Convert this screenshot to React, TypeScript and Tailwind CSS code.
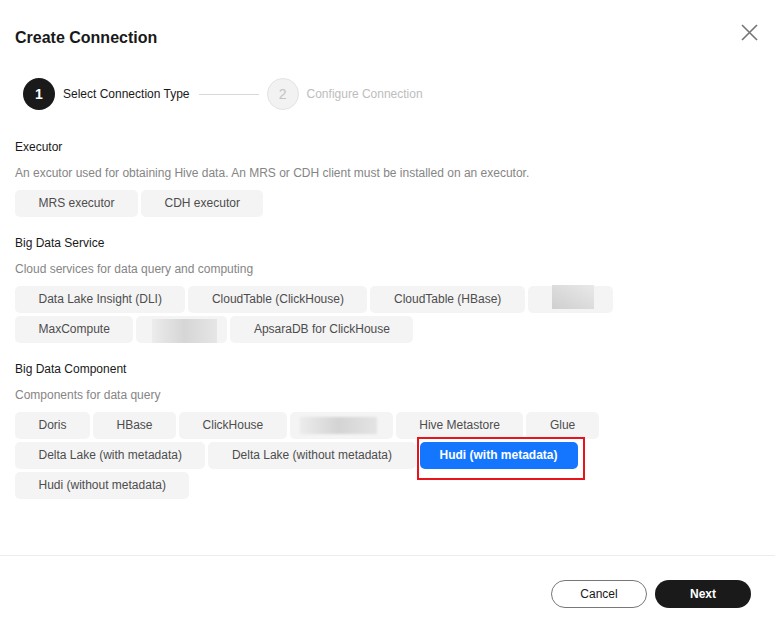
import React from 'react';

type Chip = { label: string; blur?: 'sm' | 'md' | 'lg'; selected?: boolean };

const sections: { title: string; desc: string; chips: Chip[] }[] = [
    {
        title: 'Executor',
        desc: 'An excutor used for obtaining Hive data. An MRS or CDH client must be installed on an executor.',
        chips: [{ label: 'MRS executor' }, { label: 'CDH executor' }],
    },
    {
        title: 'Big Data Service',
        desc: 'Cloud services for data query and computing',
        chips: [
            { label: 'Data Lake Insight (DLI)' },
            { label: 'CloudTable (ClickHouse)' },
            { label: 'CloudTable (HBase)' },
            { label: '', blur: 'sm' },
            { label: 'MaxCompute' },
            { label: '', blur: 'md' },
            { label: 'ApsaraDB for ClickHouse' },
        ],
    },
    {
        title: 'Big Data Component',
        desc: 'Components for data query',
        chips: [
            { label: 'Doris' },
            { label: 'HBase' },
            { label: 'ClickHouse' },
            { label: '', blur: 'lg' },
            { label: 'Hive Metastore' },
            { label: 'Glue' },
            { label: 'Delta Lake (with metadata)' },
            { label: 'Delta Lake (without metadata)' },
            { label: 'Hudi (with metadata)', selected: true },
            { label: 'Hudi (without metadata)' },
        ],
    },
];

function BlurChip({ size }: { size: 'sm' | 'md' | 'lg' }) {
    if (size === 'sm') {
        return (
            <div className="flex h-[27px] w-[85px] items-start justify-center rounded-[5px] bg-[#f4f4f4]">
                <div className="ml-[5px] mt-[-1px] h-[24px] w-[42px] bg-gradient-to-tr from-[#cfcfcf] to-[#e9e9e9] blur-[0.5px]" />
            </div>
        );
    }
    if (size === 'md') {
        return (
            <div className="flex h-[27px] w-[91px] items-end justify-center rounded-[5px] bg-[#f4f4f4]">
                <div className="ml-[6px] h-[24px] w-[65px] bg-gradient-to-r from-[#ececec] via-[#d6d6d6] to-[#e6e6e6] blur-[0.5px]" />
            </div>
        );
    }
    return (
        <div className="flex h-[27px] w-[103px] items-center justify-center rounded-[5px] bg-[#f4f4f4]">
            <div className="mr-[6px] h-[17px] w-[77px] bg-gradient-to-r from-[#ececec] via-[#d4d4d4] to-[#e4e4e4] blur-[1px]" />
        </div>
    );
}

function ChipItem({ chip }: { chip: Chip }) {
    if (chip.blur) return <BlurChip size={chip.blur} />;
    if (chip.selected) {
        return (
            <div className="relative ml-[1px]">
                <div className="h-[27px] w-[158px] rounded-[5px] bg-[#1476ff] text-center text-[12px] font-bold leading-[27px] text-white">
                    {chip.label}
                </div>
                <div className="pointer-events-none absolute -bottom-[11px] -left-[3px] -right-[7px] -top-[5px] border-2 border-[#e8141c]" />
            </div>
        );
    }
    return (
        <div className="h-[27px] rounded-[5px] bg-[#f4f4f4] px-[23.5px] text-[12px] leading-[27px] text-[#4d4d4d]">
            {chip.label}
        </div>
    );
}

export default function App() {
    return (
        <div
            className="flex h-[626px] w-[775px] flex-col bg-white text-[#191919]"
            style={{ fontFamily: '"Liberation Sans", Arial, sans-serif' }}
        >
            <div className="flex-1 px-[15px]">
                <div className="flex items-start justify-between pt-[26px]">
                    <h1 className="text-[16px] font-bold leading-[24px]">Create Connection</h1>
                    <button className="mr-[2px] mt-[-2px] text-[#757575]" aria-label="Close">
                        <svg width="17" height="17" viewBox="0 0 17 17" fill="none" stroke="currentColor" strokeWidth="1.6">
                            <path d="M1 1 L16 16 M16 1 L1 16" />
                        </svg>
                    </button>
                </div>

                <div className="mt-[28px] flex h-[32px] items-center pl-[8px]">
                    <div className="flex h-[32px] w-[32px] items-center justify-center rounded-full bg-[#1a1a1a] text-[14px] font-bold text-white">
                        1
                    </div>
                    <span className="ml-[8px] text-[12px] text-[#191919]">Select Connection Type</span>
                    <div className="ml-[9px] h-px w-[60px] bg-[#d9d9d9]" />
                    <div className="ml-[8px] flex h-[32px] w-[32px] items-center justify-center rounded-full border border-[#e3e3e3] bg-[#f2f2f2] text-[14px] text-[#c2c2c2]">
                        2
                    </div>
                    <span className="ml-[8px] text-[12px] text-[#bdbdbd]">Configure Connection</span>
                </div>

                <div className="mt-[28px] flex flex-col gap-[17px]">
                    {sections.map((s) => (
                        <div key={s.title}>
                            <div className="text-[12px] leading-[18px] text-[#191919]">{s.title}</div>
                            <div className="mt-[8px] text-[12px] leading-[18px] text-[#858585]">{s.desc}</div>
                            <div className="mt-[8px] flex w-[640px] flex-wrap gap-[3px]">
                                {s.chips.map((c, i) => (
                                    <ChipItem key={i} chip={c} />
                                ))}
                            </div>
                        </div>
                    ))}
                </div>
            </div>

            <div className="flex h-[71px] items-start justify-end gap-[8px] border-t border-[#ececec] pr-[24px] pt-[24px]">
                <button className="h-[28px] w-[96px] rounded-full border border-[#777777] bg-white text-[12px] text-[#191919]">
                    Cancel
                </button>
                <button className="h-[28px] w-[96px] rounded-full bg-[#1a1a1a] text-[12px] font-bold text-white">
                    Next
                </button>
            </div>
        </div>
    );
}
